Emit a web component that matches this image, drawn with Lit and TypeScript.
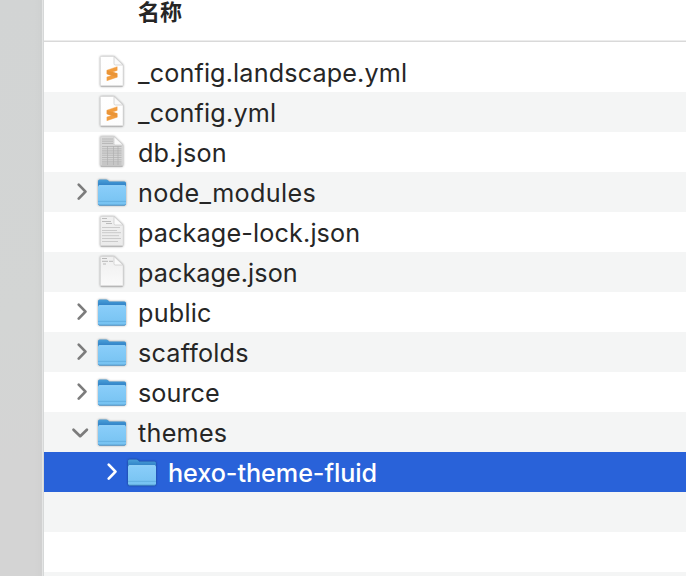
import { LitElement, html, css, svg, nothing } from "lit";
import { customElement } from "lit/decorators.js";
import { classMap } from "lit/directives/class-map.js";

type Kind = "sublime" | "dense" | "lines" | "brief" | "folder";

interface Entry {
  name: string;
  kind: Kind;
  open?: boolean;
  nested?: boolean;
  selected?: boolean;
  tracking: number;
}

const entries: Entry[] = [
  { name: "_config.landscape.yml", kind: "sublime", tracking: 0.14 },
  { name: "_config.yml", kind: "sublime", tracking: 0.18 },
  { name: "db.json", kind: "dense", tracking: 0.2 },
  { name: "node_modules", kind: "folder", tracking: 0.34 },
  { name: "package-lock.json", kind: "lines", tracking: 0.14 },
  { name: "package.json", kind: "brief", tracking: 0.07 },
  { name: "public", kind: "folder", tracking: 0.22 },
  { name: "scaffolds", kind: "folder", tracking: 0.2 },
  { name: "source", kind: "folder", tracking: 0.05 },
  { name: "themes", kind: "folder", open: true, tracking: 0.26 },
  { name: "hexo-theme-fluid", kind: "folder", nested: true, selected: true, tracking: -0.06 },
];

const page = "M5.2 4.5H18L27 13V33.2Q27 34.2 26 34.2H5.2Q4.4 34.2 4.4 33.2V5.3Q4.4 4.5 5.2 4.5Z";

const details = {
  sublime: svg`<path d="M10.9 18.2L21.2 14.7V18.4L16.6 20L21.2 21.4V25.2L10.9 28.7V25L15.6 23.4L10.9 21.9Z" fill="#f29d3e" stroke="#f29d3e" stroke-width=".4" stroke-linejoin="round"/>
    <path d="M10.9 18.4V21.9L21.2 25.2V21.4Z" fill="#ea9436"/>`,
  dense: svg`<path d="M6 7H17M6 9.2H17M6 11.4H17" stroke="#b6b6b6" stroke-width="1"/>
    <path d="M6 14.5H25.5M6 16.7H25.5M6 18.9H25.5M6 21.1H25.5M6 23.3H25.5M6 25.5H25.5M6 27.7H25.5M6 29.9H25.5M6 32H25.5" stroke="#bababa" stroke-width="1.1"/>
    <path d="M11.5 14V33M17.5 14V33M22 14V33" stroke="#b0b0b0" stroke-width=".7"/>`,
  lines: svg`<path d="M6 6.5H11M6 9.5H15M10 11.5H16" stroke="#bcbcbc"/>
    <path d="M6 15.5H24M6 18.5H21M6 20.7H25M6 23.7H23M6 26.5H25M6 29.5H22" stroke="#c6c6c6" stroke-width=".9"/>`,
  brief: svg`<path d="M6 6.5H11M6 9.3H12M13 9.3H17M7 12H10" stroke="#b8b8b8"/>`,
};

function icon(kind: Kind, id: number) {
  if (kind === "folder") {
    return html`<svg class="icon" viewBox="0 0 32 40">
      <defs>
        <linearGradient id="front${id}" x2="0" y2="1">
          <stop stop-color="#8acefa" /><stop offset="1" stop-color="#76c2f1" />
        </linearGradient>
        <linearGradient id="back${id}" x2="0" y2="1">
          <stop stop-color="#4ba0d8" /><stop offset=".25" stop-color="#2f80c6" />
        </linearGradient>
      </defs>
      <path class="cast" d="M2 9Q2 7.4 3.6 7.4H10.2Q11.3 7.4 12 8.2L13.2 9.4H28.4Q30 9.4 30 11V31.8Q30 33.5 28.4 33.5H3.6Q2 33.5 2 31.8Z" fill="url(#back${id})" />
      <path d="M2 14.8Q2 13.3 3.3 13.3H28.7Q30 13.3 30 14.8V31.6Q30 33 28.4 33H3.6Q2 33 2 31.6Z" fill="url(#front${id})" />
      <path d="M3 13.7H29" stroke="#a5dcfc" stroke-width=".7" />
      <path d="M2 29.4H30" stroke="#62afe0" stroke-width=".9" />
      <path d="M3 33H29" stroke="#569dcb" stroke-width=".8" />
    </svg>`;
  }
  const tones: Record<string, [string, string]> = {
    sublime: ["#ffffff", "#fdfdfd"],
    dense: ["#d9d9d9", "#d2d2d2"],
    lines: ["#f0f0f0", "#ebebeb"],
    brief: ["#efefef", "#fafafa"],
  };
  return html`<svg class="icon" viewBox="0 0 32 40">
    <defs>
      <linearGradient id="paper${id}" x2="0" y2="1">
        <stop stop-color=${tones[kind][0]} />
        <stop offset="1" stop-color=${tones[kind][1]} />
      </linearGradient>
    </defs>
    <path class="cast" d=${page} fill="url(#paper${id})" stroke="#d6d6d6" stroke-width=".5" />
    ${details[kind]}
    <path d="M18 4.5V11.7Q18 13 19.3 13H27Z" fill="#fafafa" stroke="#c8c8c8" stroke-width=".7" />
    <path d="M4.8 34.2H26.6" stroke="#a6a6a6" stroke-width=".9" />
  </svg>`;
}

@customElement("app-root")
export class AppRoot extends LitElement {
  static styles = css`
    :host {
      display: flex;
      width: 686px;
      height: 576px;
      overflow: hidden;
      background: #fff;
      color: #262626;
      font-family: Inter, "Noto Sans CJK SC", sans-serif;
    }
    .sidebar {
      box-sizing: border-box;
      flex: 0 0 44px;
      border-right: 1px solid #d6d8d8;
      box-shadow: inset -1px 0 #e4e5e5;
      background: linear-gradient(90deg, transparent 34px, rgba(0, 0, 0, 0.015) 42px),
        linear-gradient(172deg, #d2d4d4, #d3d5d4 55%, #d4d4d4 80%);
    }
    .list {
      flex: 1;
      min-width: 0;
    }
    .header {
      box-sizing: border-box;
      height: 42px;
      padding-left: 94px;
      border-bottom: 1px solid #d9d9d9;
      box-shadow: inset 0 -1px #ececec;
      font: 700 22px/20px "Noto Sans CJK SC", sans-serif;
    }
    .rows {
      padding-top: 10px;
    }
    .row {
      box-sizing: border-box;
      display: flex;
      height: 40px;
      padding-left: 24px;
    }
    .row:nth-child(even) {
      background: #f4f5f5;
    }
    .row.nested {
      padding-left: 54px;
    }
    .row.selected {
      background: #2962d9;
      color: #fff;
    }
    .arrow {
      flex: 0 0 28px;
      height: 40px;
      fill: none;
      stroke: #7c7c7c;
      stroke-width: 2.7;
      stroke-linecap: round;
      stroke-linejoin: round;
    }
    .selected .arrow {
      stroke: #fff;
    }
    .icon {
      flex: 0 0 32px;
      height: 40px;
    }
    .cast {
      filter: drop-shadow(0 0.6px 0.8px rgba(0, 0, 0, 0.4));
    }
    .name {
      margin-left: 10px;
      font-size: 25.2px;
      line-height: 43px;
      white-space: nowrap;
    }
    .selected .name {
      font-weight: 500;
    }
  `;

  private row(e: Entry, i: number) {
    return html`<div class=${classMap({ row: true, nested: !!e.nested, selected: !!e.selected })}>
      <svg class="arrow" viewBox="0 0 28 40">
        ${e.kind !== "folder"
          ? nothing
          : e.open
            ? svg`<path d="M5.5 17.7L12.2 24.2L18.9 17.7"/>`
            : svg`<path d="M10.7 12.6L17.5 19.6L10.7 26.6"/>`}
      </svg>
      ${icon(e.kind, i)}
      <span class="name" style="letter-spacing:${e.tracking}px">${e.name}</span>
    </div>`;
  }

  render() {
    return html`
      <div class="sidebar"></div>
      <div class="list">
        <div class="header">名称</div>
        <div class="rows">
          ${entries.map((e, i) => this.row(e, i))}
          <div class="row"></div>
          <div class="row"></div>
          <div class="row"></div>
        </div>
      </div>
    `;
  }
}
